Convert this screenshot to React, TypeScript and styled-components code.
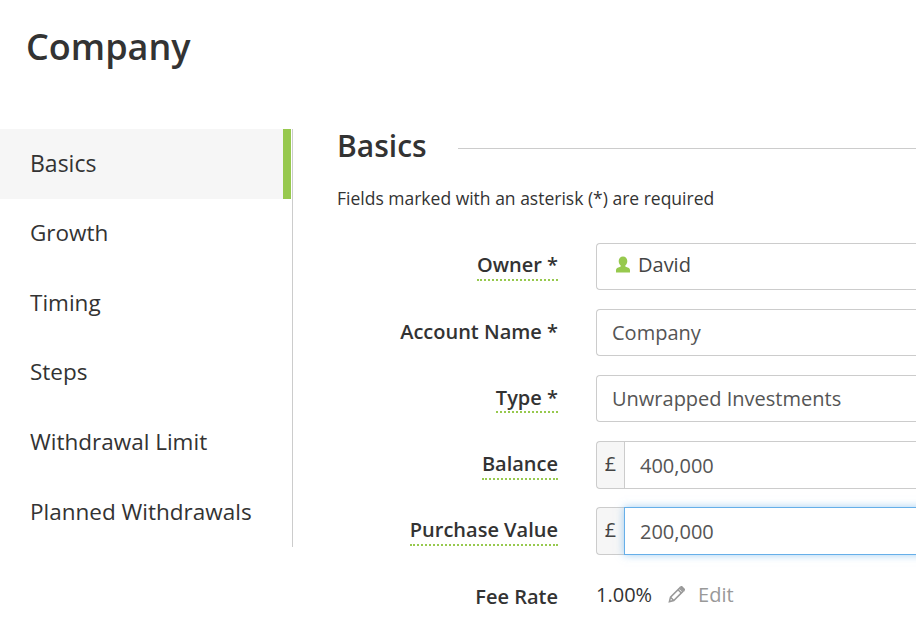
import React from "react";
import styled, { createGlobalStyle } from "styled-components";

const GlobalStyle = createGlobalStyle`
  html, body {
    margin: 0;
    padding: 0;
    background: #fff;
    overflow: hidden;
  }
  * {
    box-sizing: border-box;
  }
  body {
    width: 916px;
    height: 635px;
    font-family: "Open Sans", "Liberation Sans", sans-serif;
    color: #333;
  }
`;

const Page = styled.div`
  width: 916px;
  height: 635px;
  overflow: hidden;
`;

const Title = styled.h1`
  margin: 0;
  padding: 24px 0 0 26px;
  height: 129px;
  font-size: 36px;
  line-height: 46px;
  font-weight: 600;
  color: #333;
`;

const Columns = styled.div`
  display: flex;
  align-items: flex-start;
`;

const Sidebar = styled.nav`
  flex: none;
  width: 293px;
  border-right: 1px solid #ccc;
  padding-right: 1px;
  height: 418px;
`;

const NavItem = styled.div<{ $active?: boolean }>`
  height: 69.7px;
  padding: 0 0 ${({ $active }) => ($active ? "1px" : "2px")} 30px;
  display: flex;
  align-items: center;
  font-size: ${({ $active }) => ($active ? "23px" : "22.5px")};
  font-weight: ${({ $active }) => ($active ? 500 : 400)};
  color: #333;
  background: ${({ $active }) => ($active ? "#f6f6f6" : "#fff")};
  border-right: 8px solid ${({ $active }) => ($active ? "#97c94e" : "#fff")};
`;

const Main = styled.main`
  flex: none;
  width: 623px;
  padding-left: 44px;
`;

const SectionHead = styled.div`
  display: flex;
  align-items: center;
  gap: 31px;
  height: 38px;
`;

const SectionTitle = styled.h2`
  margin: -4px 0 0;
  font-size: 30px;
  line-height: 36px;
  font-weight: 600;
  color: #333;
`;

const Rule = styled.div`
  flex: 1;
  height: 1px;
  background: #ccc;
`;

const Hint = styled.p`
  margin: 19px 0 0;
  height: 57px;
  font-size: 17.5px;
  line-height: 24px;
  color: #333;
`;

const Form = styled.div`
  display: flex;
  flex-direction: column;
  gap: 19px;
  width: 640px;
`;

const Row = styled.div`
  display: flex;
  align-items: center;
  gap: 38px;
  height: 47px;
`;

const LabelCell = styled.div`
  flex: none;
  width: 221px;
  display: flex;
  justify-content: flex-end;
`;

const Label = styled.span<{ $hint?: boolean }>`
  font-size: 20px;
  line-height: 27px;
  font-weight: 600;
  color: #333;
  padding-bottom: 1px;
  border-bottom: ${({ $hint }) => ($hint ? "2px dotted #97c94e" : "2px solid transparent")};
`;

const OwnerLabel = styled(Label)`
  margin-bottom: 2px;
`;

const TypeLabel = styled(Label)`
  padding-bottom: 0;
`;

const FeeLabel = styled(Label)`
  margin-top: 3px;
`;

const Field = styled.div`
  flex: none;
  width: 420px;
  height: 47px;
  display: flex;
  align-items: center;
  padding-left: 15px;
  border: 1px solid #ccc;
  border-right: 0;
  border-radius: 4px 0 0 4px;
  font-size: 20px;
  color: #555;
`;

const OwnerField = styled(Field)`
  gap: 7px;
  padding: 0 0 5px 18px;
`;

const OwnerName = styled.span`
  color: #444;
`;

const Group = styled.div`
  flex: none;
  width: 420px;
  height: 48px;
  display: flex;
`;

const Addon = styled.div`
  flex: none;
  width: 28px;
  display: flex;
  align-items: center;
  justify-content: center;
  padding-bottom: 2px;
  background: #f6f6f6;
  border: 1px solid #ccc;
  border-right: 0;
  border-radius: 4px 0 0 4px;
  font-size: 20px;
  color: #444;
`;

const GroupInput = styled.div<{ $focus?: boolean }>`
  flex: 1;
  display: flex;
  align-items: center;
  padding: 1px 0 0 15px;
  border: 1px solid ${({ $focus }) => ($focus ? "#66afe9" : "#ccc")};
  border-right: 0;
  font-size: 20px;
  color: #555;
  box-shadow: ${({ $focus }) => ($focus ? "0 0 8px rgba(102, 175, 233, 0.6)" : "none")};
`;

const StaticValue = styled.div`
  display: flex;
  align-items: center;
  padding-bottom: 5px;
  font-size: 20px;
  color: #333;
`;

const EditLink = styled.span`
  display: inline-flex;
  align-items: center;
  gap: 13px;
  margin-left: 16px;
  color: #999;
`;

function PersonIcon() {
  return (
    <svg width="16" height="17" viewBox="0 0 16 17" fill="#97c94e">
      <path d="M8 .5c2.400 0 4.300 1.900 4.300 4.500 0 2-.9 3.600-2 4.600v1l1 .4c2 .7 3.700 1.300 3.700 3v2.500H1V14c0-1.700 1.700-2.300 3.700-3l1-.4v-1c-1.100-1-2-2.600-2-4.600C3.700 2.400 5.600.5 8 .5z" />
    </svg>
  );
}

function PencilIcon() {
  return (
    <svg width="17" height="17" viewBox="0 0 17 17" fill="none" stroke="#999" strokeWidth="1.5">
      <path d="M1.400 15.600l1.100-4.400L11.600 2.100l3.300 3.300-9.100 9.100z" />
      <path d="M2.500 11.200l3.300 3.300M10 3.700l3.300 3.300" />
      <path d="M12.600 1.100l1-.5 2.800 2.800-.5 1z" fill="#999" />
    </svg>
  );
}

const navItems = ["Basics", "Growth", "Timing", "Steps", "Withdrawal Limit", "Planned Withdrawals"];

export default function App() {
  return (
    <Page>
      <GlobalStyle />
      <Title>Company</Title>
      <Columns>
        <Sidebar>
          {navItems.map((item, i) => (
            <NavItem key={item} $active={i === 0}>
              {item}
            </NavItem>
          ))}
        </Sidebar>
        <Main>
          <SectionHead>
            <SectionTitle>Basics</SectionTitle>
            <Rule />
          </SectionHead>
          <Hint>Fields marked with an asterisk (*) are required</Hint>
          <Form>
            <Row>
              <LabelCell>
                <OwnerLabel $hint>Owner *</OwnerLabel>
              </LabelCell>
              <OwnerField>
                <PersonIcon />
                <OwnerName>David</OwnerName>
              </OwnerField>
            </Row>
            <Row>
              <LabelCell>
                <Label>Account Name *</Label>
              </LabelCell>
              <Field>Company</Field>
            </Row>
            <Row>
              <LabelCell>
                <TypeLabel $hint>Type *</TypeLabel>
              </LabelCell>
              <Field>Unwrapped Investments</Field>
            </Row>
            <Row>
              <LabelCell>
                <Label $hint>Balance</Label>
              </LabelCell>
              <Group>
                <Addon>£</Addon>
                <GroupInput>400,000</GroupInput>
              </Group>
            </Row>
            <Row>
              <LabelCell>
                <Label $hint>Purchase Value</Label>
              </LabelCell>
              <Group>
                <Addon>£</Addon>
                <GroupInput $focus>200,000</GroupInput>
              </Group>
            </Row>
            <Row>
              <LabelCell>
                <FeeLabel>Fee Rate</FeeLabel>
              </LabelCell>
              <StaticValue>
                1.00%
                <EditLink>
                  <PencilIcon />
                  Edit
                </EditLink>
              </StaticValue>
            </Row>
          </Form>
        </Main>
      </Columns>
    </Page>
  );
}
